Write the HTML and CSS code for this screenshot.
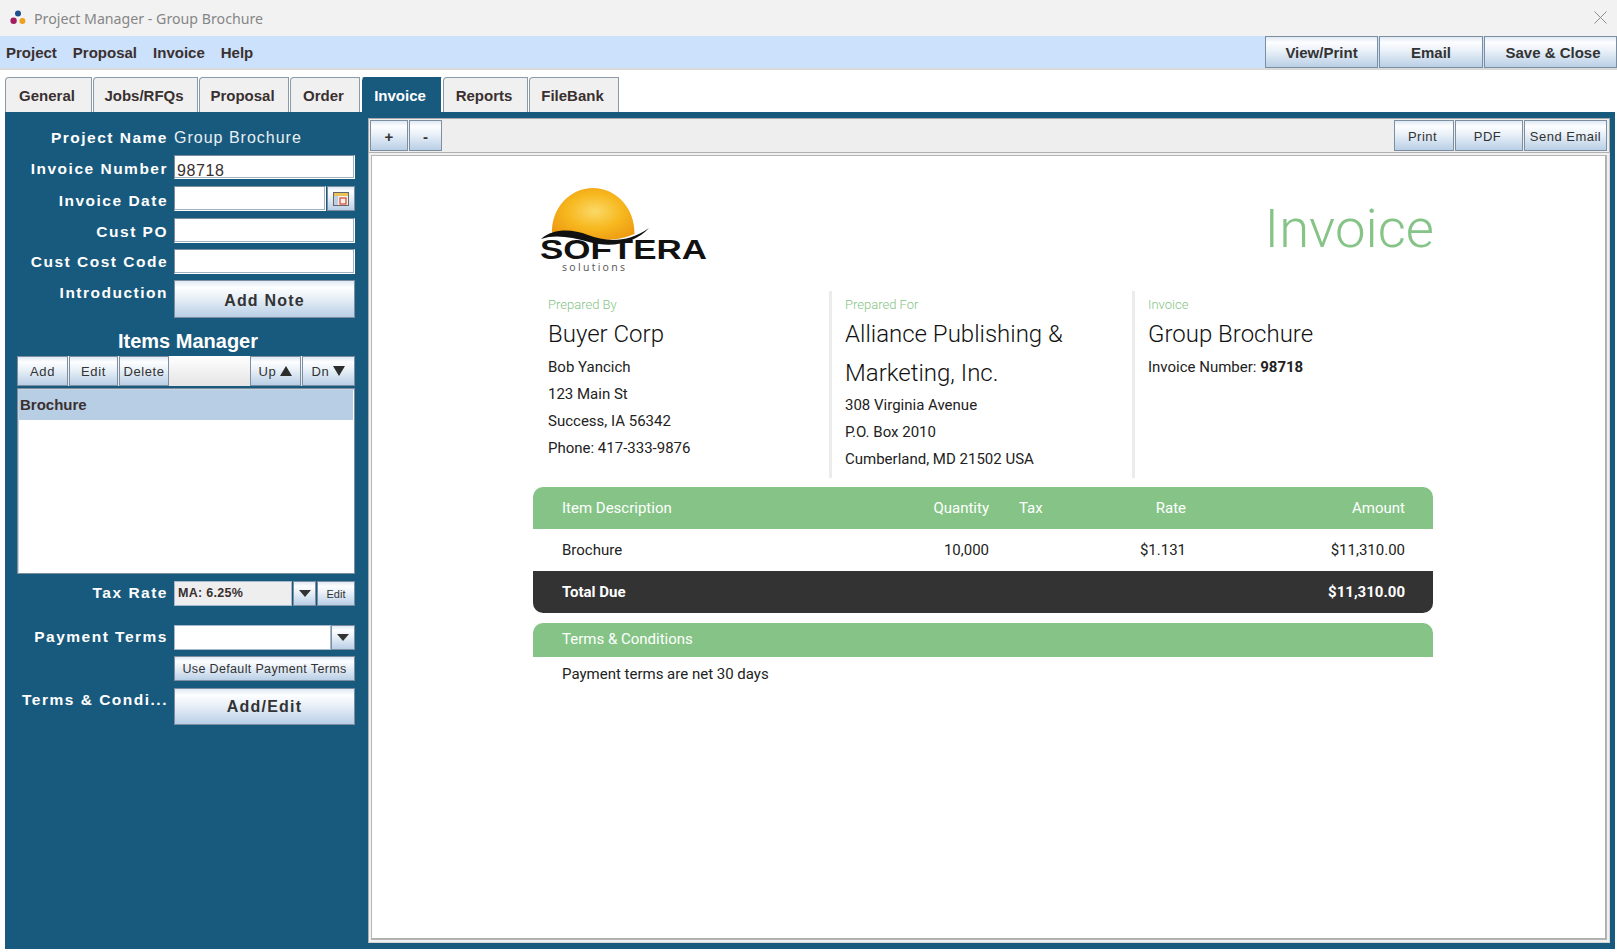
FILE: index.html
```html
<!DOCTYPE html>
<html lang="en">
<head>
<meta charset="utf-8">
<title>Project Manager - Group Brochure</title>
<link rel="stylesheet" href="styles.css">
</head>
<body>
<div class="app">
  <header class="titlebar">
    <svg class="app-icon" viewBox="0 0 16 15" width="16" height="15"><circle cx="8" cy="3.6" r="3" fill="#1d4f8c"/><circle cx="3.6" cy="10.8" r="3.2" fill="#a01d5f"/><circle cx="12.4" cy="11" r="3" fill="#eea020"/></svg>
    <span class="title-text">Project Manager - Group Brochure</span>
    <svg class="close-icon" viewBox="0 0 13 13" width="13" height="13"><path d="M.5.5l12 12M12.5.5l-12 12" stroke="#8c8c8c" stroke-width="1" fill="none"/></svg>
  </header>

  <nav class="menubar">
    <div class="menus"><span>Project</span><span>Proposal</span><span>Invoice</span><span>Help</span></div>
    <div class="actions">
      <button class="btn action act-view">View/Print</button>
      <button class="btn action act-email">Email</button>
      <button class="btn action act-save">Save &amp; Close</button>
    </div>
  </nav>

  <div class="tabs">
    <div class="tab t-general">General</div>
    <div class="tab t-jobs">Jobs/RFQs</div>
    <div class="tab t-proposal">Proposal</div>
    <div class="tab t-order">Order</div>
    <div class="tab active t-invoice">Invoice</div>
    <div class="tab t-reports">Reports</div>
    <div class="tab t-filebank">FileBank</div>
  </div>

  <div class="workspace">
    <aside class="sidebar">
      <div class="row r-name"><label>Project Name</label><span class="value">Group Brochure</span></div>
      <div class="row r-num"><label>Invoice Number</label><div class="field">98718</div></div>
      <div class="row r-date"><label>Invoice Date</label>
        <div class="combo"><div class="field grow"></div>
          <button class="btn cal"><svg viewBox="0 0 16 14" width="16" height="14"><rect x=".5" y=".5" width="15" height="13" fill="#f4f1e6" stroke="#666"/><rect x="1" y="1" width="14" height="3" fill="#e8c25a"/><rect x="1" y="4" width="4" height="9" fill="#bcd0e4"/><rect x="7" y="6" width="6" height="6" fill="none" stroke="#d8423a" stroke-width="1.2"/></svg></button>
        </div>
      </div>
      <div class="row r-po"><label>Cust PO</label><div class="field"></div></div>
      <div class="row r-code"><label>Cust Cost Code</label><div class="field"></div></div>
      <div class="row r-note"><label>Introduction</label><button class="btn big">Add Note</button></div>

      <h2 class="items-title">Items Manager</h2>
      <div class="items-bar">
        <button class="btn ib b-add">Add</button>
        <button class="btn ib b-edit">Edit</button>
        <button class="btn ib b-del">Delete</button>
        <span class="spacer"></span>
        <button class="btn ib b-up">Up<svg class="tri" viewBox="0 0 12 10" width="12" height="10"><path d="M6 0l6 10H0z" fill="#2d2d2d"/></svg></button>
        <button class="btn ib b-dn">Dn<svg class="tri" viewBox="0 0 12 10" width="12" height="10"><path d="M0 0h12L6 10z" fill="#2d2d2d"/></svg></button>
      </div>
      <div class="items-list"><div class="item">Brochure</div></div>

      <div class="row r-tax"><label>Tax Rate</label>
        <div class="combo">
          <div class="select grey grow">MA: 6.25%</div>
          <button class="btn drop"><svg viewBox="0 0 12 7" width="12" height="7"><path d="M0 0h12L6 7z" fill="#333"/></svg></button>
          <button class="btn tiny">Edit</button>
        </div>
      </div>
      <div class="row r-terms"><label>Payment Terms</label>
        <div class="combo">
          <div class="select grow"></div>
          <button class="btn drop"><svg viewBox="0 0 12 7" width="12" height="7"><path d="M0 0h12L6 7z" fill="#333"/></svg></button>
        </div>
      </div>
      <div class="row r-default"><span></span><button class="btn small">Use Default Payment Terms</button></div>
      <div class="row r-edit"><label>Terms &amp; Condi...</label><button class="btn big">Add/Edit</button></div>
    </aside>

    <main class="main">
      <div class="toolbar">
        <button class="btn tb t-plus">+</button>
        <button class="btn tb t-minus">-</button>
        <span class="spacer"></span>
        <button class="btn tb2 t-print">Print</button>
        <button class="btn tb2 t-pdf">PDF</button>
        <button class="btn tb2 t-send">Send Email</button>
      </div>
      <div class="doc">
        <article class="invoice">
          <div class="inv-head">
            <svg class="logo" viewBox="0 0 172 88" width="172" height="88">
              <defs>
                <radialGradient id="sun" cx="0.52" cy="0.45" r="0.6"><stop offset="0" stop-color="#fbd968"/><stop offset="0.55" stop-color="#f7b81f"/><stop offset="1" stop-color="#ee9c12"/></radialGradient>
              </defs>
              <path d="M12 48C11 22 30 2 53 2s42 20 41.500 46c-14 6-30 8-44 3C36 45 24 43 12 48z" fill="url(#sun)"/>
              <path d="M1 53C14 42 32 43 48 49c18 7 40 8 61-7-13 14-35 21-60 14C31 51 15 48 1 53z" fill="#111"/>
              <text class="logo-main" x="0" y="73" textLength="167" lengthAdjust="spacingAndGlyphs">SOFTERA</text>
              <text class="logo-sub" x="22" y="85" textLength="63">solutions</text>
            </svg>
            <h1 class="inv-title">Invoice</h1>
          </div>
          <div class="parties">
            <section class="party p1">
              <div class="p-label">Prepared By</div>
              <div class="p-name">Buyer Corp</div>
              <div class="p-line">Bob Yancich</div>
              <div class="p-line">123 Main St</div>
              <div class="p-line">Success, IA 56342</div>
              <div class="p-line">Phone: 417-333-9876</div>
            </section>
            <section class="party p2">
              <div class="p-label">Prepared For</div>
              <div class="p-name">Alliance Publishing &amp;<br>Marketing, Inc.</div>
              <div class="p-line">308 Virginia Avenue</div>
              <div class="p-line">P.O. Box 2010</div>
              <div class="p-line">Cumberland, MD 21502 USA</div>
            </section>
            <section class="party p3">
              <div class="p-label">Invoice</div>
              <div class="p-name">Group Brochure</div>
              <div class="p-line">Invoice Number: <b>98718</b></div>
            </section>
          </div>
          <div class="tline thead">
            <span>Item Description</span><span class="num">Quantity</span><span class="tax">Tax</span><span class="num">Rate</span><span class="num">Amount</span>
          </div>
          <div class="tline tbody">
            <span>Brochure</span><span class="num">10,000</span><span class="tax"></span><span class="num">$1.131</span><span class="num">$11,310.00</span>
          </div>
          <div class="tline ttotal">
            <span>Total Due</span><span></span><span></span><span></span><span class="num">$11,310.00</span>
          </div>
          <div class="terms-head">Terms &amp; Conditions</div>
          <div class="terms-body">Payment terms are net 30 days</div>
        </article>
      </div>
    </main>
  </div>
</div>
</body>
</html>
```

FILE: styles.css
```css
* { box-sizing: border-box; }
html, body { margin: 0; padding: 0; background: #fff; }
body { font-family: "Liberation Sans", Arial, sans-serif; color: #333; }
.app { width: 1617px; height: 952px; overflow: hidden; display: flex; flex-direction: column; }

.btn {
  font-family: "Liberation Sans", Arial, sans-serif;
  color: #333;
  border: 1px solid #7c8ea0;
  background: linear-gradient(#dfe9f3 0, #fdfeff 18%, #eaf1f8 45%, #b9cfe6 100%);
  padding: 0;
  margin: 0;
  display: flex;
  align-items: center;
  justify-content: center;
  white-space: nowrap;
}

.titlebar { height: 36px; background: #f2f2f2; display: flex; align-items: center; padding: 0 10px 0 10px; }
.app-icon { margin-right: 8px; margin-top: -2px; }
.title-text { font-family: "Noto Sans", sans-serif; font-size: 14.200px; color: #868686; flex: 1; }
.close-icon { margin-top: -2px; }

.menubar { height: 34px; background: #cce1fb; border-bottom: 2px solid #d9d9d9; display: flex; justify-content: space-between; }
.menus { display: flex; gap: 16px; padding-left: 6px; font-weight: 700; font-size: 15px; line-height: 34px; color: #3a3030; }
.actions { display: flex; gap: 1px; height: 32px; }
.action { font-size: 15px; font-weight: 700; }
.act-view { width: 113px; }
.act-email { width: 104px; }
.act-save { width: 133px; padding-left: 5px; }

.tabs { display: flex; gap: 1px; padding: 7px 0 0 5px; height: 42px; }
.tab {
  height: 35px;
  background: #f0f0f0;
  border: 1px solid #8a9aa8;
  border-bottom: 0;
  border-top-left-radius: 4px;
  font-weight: 700;
  font-size: 15px;
  color: #3a3030;
  padding-right: 3px;
  display: flex;
  align-items: center;
  justify-content: center;
}
.tab.active { background: #185a7d; color: #fff; border-color: #fff; border-top-color: #185a7d; }
.t-general { width: 87px; }
.t-jobs { width: 105px; }
.t-proposal { width: 90px; }
.t-order { width: 70px; }
.t-invoice { width: 81px; }
.t-reports { width: 85px; }
.t-filebank { width: 90px; }

.workspace { flex: 1; display: flex; background: #185a7d; margin: 0 2px 3px 5px; }

.sidebar { width: 363px; flex: none; padding-top: 14px; }
.row { display: grid; grid-template-columns: 161px 181px; grid-template-rows: 100%; column-gap: 8px; }
.row label, .row .value { line-height: 24px; white-space: nowrap; }
.row label { height: 24px; text-align: right; color: #fff; font-weight: 700; font-size: 15.500px; letter-spacing: 1.500px; margin-right: -2px; }
.row .value { color: #e9eff4; font-size: 16px; letter-spacing: 1px; }
.r-name { height: 24px; }
.r-num { height: 24px; margin-top: 5px; }
.r-date { height: 25px; margin-top: 7px; }
.r-po { height: 25px; margin-top: 7px; }
.r-code { height: 25px; margin-top: 6px; }
.r-note { height: 38px; margin-top: 6px; }
.r-tax { height: 25px; margin-top: 7px; }
.r-terms { height: 25px; margin-top: 19px; }
.r-default { height: 25px; margin-top: 6px; }
.r-edit { height: 37px; margin-top: 7px; }
.r-num label, .r-po label { line-height: 28px; }
.r-date label { line-height: 30px; }
.r-code label, .r-note label { line-height: 26px; }

.field {
  background: #fff;
  border: 1px solid #7c8ea0;
  border-right-color: #fff;
  border-bottom-color: #fff;
  box-shadow: inset -1px -1px 0 #9fb0c0;
  font-size: 16px;
  letter-spacing: .6px;
  color: #3a3030;
  padding: 4px 0 0 2px;
  line-height: 22px;
}
.combo { display: flex; gap: 1px; }
.grow { flex: 1; min-width: 0; }
.cal { width: 28px; }
.big { font-size: 16px; font-weight: 700; letter-spacing: 1.200px; padding-top: 1px; }
.r-note .big { padding-top: 3px; }
.small { font-size: 12.500px; letter-spacing: .35px; }
.tiny { width: 38px; font-size: 11px; }
.drop { width: 23px; }
.r-terms .drop { width: 24px; margin-left: -1px; }
.select {
  background: #fff;
  border: 1px solid #a6b8cb;
  font-size: 12.500px;
  font-weight: 700;
  padding-left: 3px;
  line-height: 23px;
  color: #3a3030;
  letter-spacing: .3px;
}
.select.grey { background: #eeeeee; border-width: 1px; }

.items-title { margin: 10px 0 0 14px; width: 338px; text-align: center; color: #fff; font-size: 20px; font-weight: 700; line-height: 27px; height: 27px; }
.items-bar { margin: 1px 0 0 12px; width: 338px; height: 30px; display: flex; gap: 1px; background: linear-gradient(#fff, #e4e4e4); }
.spacer { flex: 1; }
.ib { font-size: 13px; letter-spacing: .6px; }
.tri { margin-left: 4px; }
.b-add { width: 51px; }
.b-edit { width: 49px; }
.b-del { width: 50px; }
.b-up { width: 51px; }
.b-dn { width: 53px; }
.items-list { margin: 2px 0 0 12px; width: 338px; height: 186px; background: #fff; border: 1px solid #7c8ea0; box-shadow: inset 1px 1px 0 #c8d4df; padding: 1px; }
.item { height: 30px; line-height: 30px; background: #b7cee4; font-size: 15px; font-weight: 700; padding-left: 1px; color: #3a3030; }

.main { flex: 1; min-width: 0; display: flex; flex-direction: column; margin: 6px 5px 6px 0; }
.toolbar { height: 34px; flex: none; background: #eeeeee; border: 1px solid #a9a9a9; border-bottom: 0; padding: 1px 2px 1px 1px; display: flex; gap: 1px; }
.tb { font-size: 15px; font-weight: 700; padding-top: 2px; }
.t-plus { width: 38px; }
.t-minus { width: 33px; }
.tb2 { font-size: 13px; letter-spacing: .5px; padding-top: 2px; }
.t-print { width: 60px; padding-right: 3px; }
.t-pdf { width: 68px; padding-right: 3px; }
.t-send { width: 83px; }

.doc { flex: 1; min-height: 0; background: #fff; border: 1px solid #d5d5d5; border-top-color: #b0b0b0; border-left-color: #b0b0b0; box-shadow: inset 0 0 0 2px #f0f0f0, inset 0 0 0 3px #b5b5b5, inset -4px -4px 0 #aeaeae; padding-left: 164px; font-family: Roboto, sans-serif; color: #222; }
.invoice { width: 900px; }
.inv-head { height: 138px; display: flex; justify-content: space-between; padding: 33px 0 0 7px; }
.logo { display: block; }
.logo-main { font-family: "Liberation Sans", sans-serif; font-weight: 700; font-size: 27px; fill: #111; }
.logo-sub { font-family: "Open Sans", sans-serif; font-size: 10.500px; fill: #555; }
.inv-title { margin: 9px -1px 0 0; font-family: Roboto, sans-serif; font-weight: 300; font-size: 54.500px; line-height: 66px; color: #85c486; }

.parties { display: grid; grid-template-columns: 296px 303px 301px; height: 187px; }
.party { padding: 4px 0 0 15px; }
.p2, .p3 { border-left: 3px solid #ececec; padding-left: 13px; }
.p-label { font-weight: 300; font-size: 13px; line-height: 20px; color: #85c486; }
.p-name { font-weight: 300; font-size: 24px; line-height: 38.500px; color: #111; }
.p-line { font-size: 15px; line-height: 27px; color: #222; }
.p-line b { font-weight: 700; }

.tline { margin: 0; height: 42px; display: grid; grid-template-columns: 346px 81px 72px 125px 1fr; padding: 0 28px 0 29px; align-items: center; font-size: 15px; }
.num { text-align: right; }
.tax { padding-left: 30px; }
.thead { margin-top: 9px; background: #85c486; color: #fff; border-radius: 10px 10px 0 0; }
.ttotal { background: #333; color: #fff; font-weight: 700; border-radius: 0 0 10px 10px; }
.terms-head { margin-top: 10px; height: 34px; line-height: 32px; background: #85c486; color: #fff; border-radius: 10px 10px 0 0; padding-left: 29px; font-size: 15px; }
.terms-body { padding-left: 29px; font-size: 15px; line-height: 35px; color: #222; }
```
